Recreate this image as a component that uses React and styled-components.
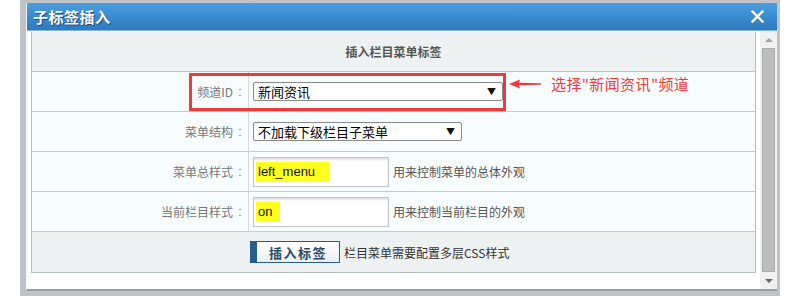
import React from 'react';
import styled, { createGlobalStyle } from 'styled-components';

const GlobalStyle = createGlobalStyle`
  html, body {
    margin: 0;
    padding: 0;
    background: #fff;
    font-family: "Noto Sans CJK SC", "Microsoft YaHei", "Liberation Sans", sans-serif;
    font-size: 12px;
  }
`;

const rows = [
  { label: '频道ID', type: 'select', value: '新闻资讯', width: 250 },
  { label: '菜单结构', type: 'select', value: '不加载下级栏目子菜单', width: 209 },
  { label: '菜单总样式', type: 'input', value: 'left_menu', mark: 74, hint: '用来控制菜单的总体外观' },
  { label: '当前栏目样式', type: 'input', value: 'on', mark: 24, hint: '用来控制当前栏目的外观' },
];

const App = () => (
  <>
    <GlobalStyle />
    <Backdrop>
      <Dialog>
        <TitleBar>
          <Title>子标签插入</Title>
          <Close>
            <svg width="13" height="13" viewBox="0 0 13 13">
              <path d="M1.5 1.5 L11.5 11.5 M11.5 1.5 L1.5 11.5" stroke="#fff" strokeWidth="2.4" strokeLinecap="square" />
            </svg>
          </Close>
        </TitleBar>
        <Body>
          <Content>
            <Table>
              <HeadRow>插入栏目菜单标签</HeadRow>
              {rows.map(row => (
                <Row key={row.label}>
                  <Label>
                    {row.label}
                    <Colon>:</Colon>
                  </Label>
                  <Cell>
                    {row.type === 'select' ? (
                      <Select $w={row.width}>
                        <span>{row.value}</span>
                        <Caret>▼</Caret>
                      </Select>
                    ) : (
                      <>
                        <Input>
                          <Mark $w={row.mark}>{row.value}</Mark>
                        </Input>
                        <Hint>{row.hint}</Hint>
                      </>
                    )}
                  </Cell>
                </Row>
              ))}
              <Footer>
                <Button>
                  <span>插入标签</span>
                </Button>
                <Note>栏目菜单需要配置多层CSS样式</Note>
              </Footer>
            </Table>
            <RedBox />
            <Callout>
              <svg width="32" height="10" viewBox="0 0 32 10">
                <path d="M0 5 L11 0.5 L10 3.8 L32 4.2 L32 5.8 L10 6.2 L11 9.5 Z" fill="#f03a3a" />
              </svg>
              <CalloutText>选择"新闻资讯"频道</CalloutText>
            </Callout>
          </Content>
          <Scrollbar>
            <ScrollArrow $down={false} />
            <Thumb />
            <ScrollArrow $down />
          </Scrollbar>
        </Body>
      </Dialog>
    </Backdrop>
  </>
);

export default App;

const Backdrop = styled.div`
  margin-left: 20px;
  width: 760px;
  height: 296px;
  background: #bfc2c6;
  padding: 3px 3px 0 6px;
  box-sizing: border-box;
`;

const Dialog = styled.div`
  background: #fff;
  border-left: 1px solid #f4f4f4;
  border-bottom: 2px solid #9c9c9c;
  height: 288px;
  box-sizing: border-box;
  display: flex;
  flex-direction: column;
`;

const TitleBar = styled.div`
  height: 28px;
  box-sizing: border-box;
  background: linear-gradient(#4a9fe0, #3584c8 70%, #2f7bbf);
  border-bottom: 1px solid #7fb4e0;
  display: flex;
  align-items: center;
  justify-content: space-between;
  padding: 0 13px 0 6px;
`;

const Title = styled.div`
  color: #fff;
  font-size: 15px;
  font-weight: bold;
  text-shadow: 1px 1px 0 #22466a;
  letter-spacing: 0.5px;
`;

const Close = styled.div`
  display: flex;
  align-items: center;
`;

const Body = styled.div`
  flex: 1;
  display: flex;
  min-height: 0;
`;

const Content = styled.div`
  flex: 1;
  position: relative;
  padding: 1px 4px 0 4px;
`;

const Table = styled.div`
  border: 1px solid #b3bcbc;
  border-top: none;
  display: flex;
  flex-direction: column;
`;

const HeadRow = styled.div`
  height: 40px;
  background: #eef1f2;
  border-bottom: 1px solid #b8c0c0;
  box-sizing: border-box;
  display: flex;
  align-items: center;
  justify-content: center;
  font-weight: bold;
  color: #555;
  font-size: 12px;
`;

const Row = styled.div`
  height: 40px;
  box-sizing: border-box;
  background: #f7fcff;
  border-bottom: 1px solid #c4cbcb;
  display: grid;
  grid-template-columns: 217px 1fr;
`;

const Label = styled.div`
  border-right: 1px solid #d4dada;
  display: flex;
  align-items: center;
  justify-content: flex-end;
  padding-right: 1px;
  color: #777;
  font-size: 12px;
`;

const Colon = styled.span`
  width: 14px;
  text-align: center;
  font-family: "Liberation Sans", sans-serif;
`;

const Cell = styled.div`
  display: flex;
  align-items: center;
  padding-left: 4px;
`;

const Select = styled.div`
  width: ${p => p.$w}px;
  height: 19px;
  box-sizing: border-box;
  border: 1px solid #8a8a8a;
  border-radius: 2px;
  background: #fff;
  display: flex;
  align-items: center;
  justify-content: space-between;
  padding: 0 6px 0 4px;
  font-size: 13px;
  color: #000;
`;

const Caret = styled.span`
  font-size: 9px;
  color: #111;
`;

const Input = styled.div`
  width: 136px;
  height: 30px;
  box-sizing: border-box;
  border: 1px solid #c3c3c3;
  box-shadow: inset 0 2px 2px #e2e2e2;
  background: #fff;
  display: flex;
  align-items: center;
  padding-left: 2px;
`;

const Mark = styled.span`
  width: ${p => p.$w}px;
  height: 20px;
  background: #ffff20;
  display: flex;
  align-items: center;
  padding-left: 2px;
  box-sizing: border-box;
  font-size: 13px;
  color: #111;
  font-family: "Liberation Sans", sans-serif;
`;

const Hint = styled.span`
  margin-left: 4px;
  color: #555;
  font-size: 12px;
`;

const Footer = styled.div`
  height: 40px;
  box-sizing: border-box;
  background: #eef1f2;
  display: flex;
  align-items: center;
  padding-left: 218px;
`;

const Button = styled.div`
  width: 90px;
  height: 22px;
  box-sizing: border-box;
  border: 1px solid #235e8c;
  border-left: 7px solid #235e8c;
  background: linear-gradient(#ffffff, #e9eef2);
  display: flex;
  align-items: center;
  justify-content: center;
  font-weight: bold;
  font-size: 13px;
  color: #2c4a66;
  letter-spacing: 1.5px;
`;

const Note = styled.span`
  margin-left: 4px;
  color: #333;
  font-size: 12px;
`;

const RedBox = styled.div`
  position: absolute;
  left: 162px;
  top: 42px;
  width: 317px;
  height: 38px;
  box-sizing: border-box;
  border: 3px solid #f03a3a;
`;

const Callout = styled.div`
  position: absolute;
  left: 482px;
  top: 42px;
  display: flex;
  align-items: center;
  gap: 10px;
`;

const CalloutText = styled.span`
  color: #f03a3a;
  font-size: 15px;
  letter-spacing: 0.4px;
`;

const Scrollbar = styled.div`
  width: 17px;
  background: #f0f0f0;
  display: flex;
  flex-direction: column;
  align-items: center;
`;

const ScrollArrow = styled.div`
  height: 17px;
  width: 100%;
  display: flex;
  align-items: center;
  justify-content: center;
  &::after {
    content: '';
    border-left: 4px solid transparent;
    border-right: 4px solid transparent;
    ${p => (p.$down ? 'border-top: 4px solid #666;' : 'border-bottom: 4px solid #a3a3a3;')}
  }
`;

const Thumb = styled.div`
  flex: 1;
  width: 13px;
  box-sizing: border-box;
  background: #bdbdbd;
  border: 1px solid #a9a9a9;
`;
